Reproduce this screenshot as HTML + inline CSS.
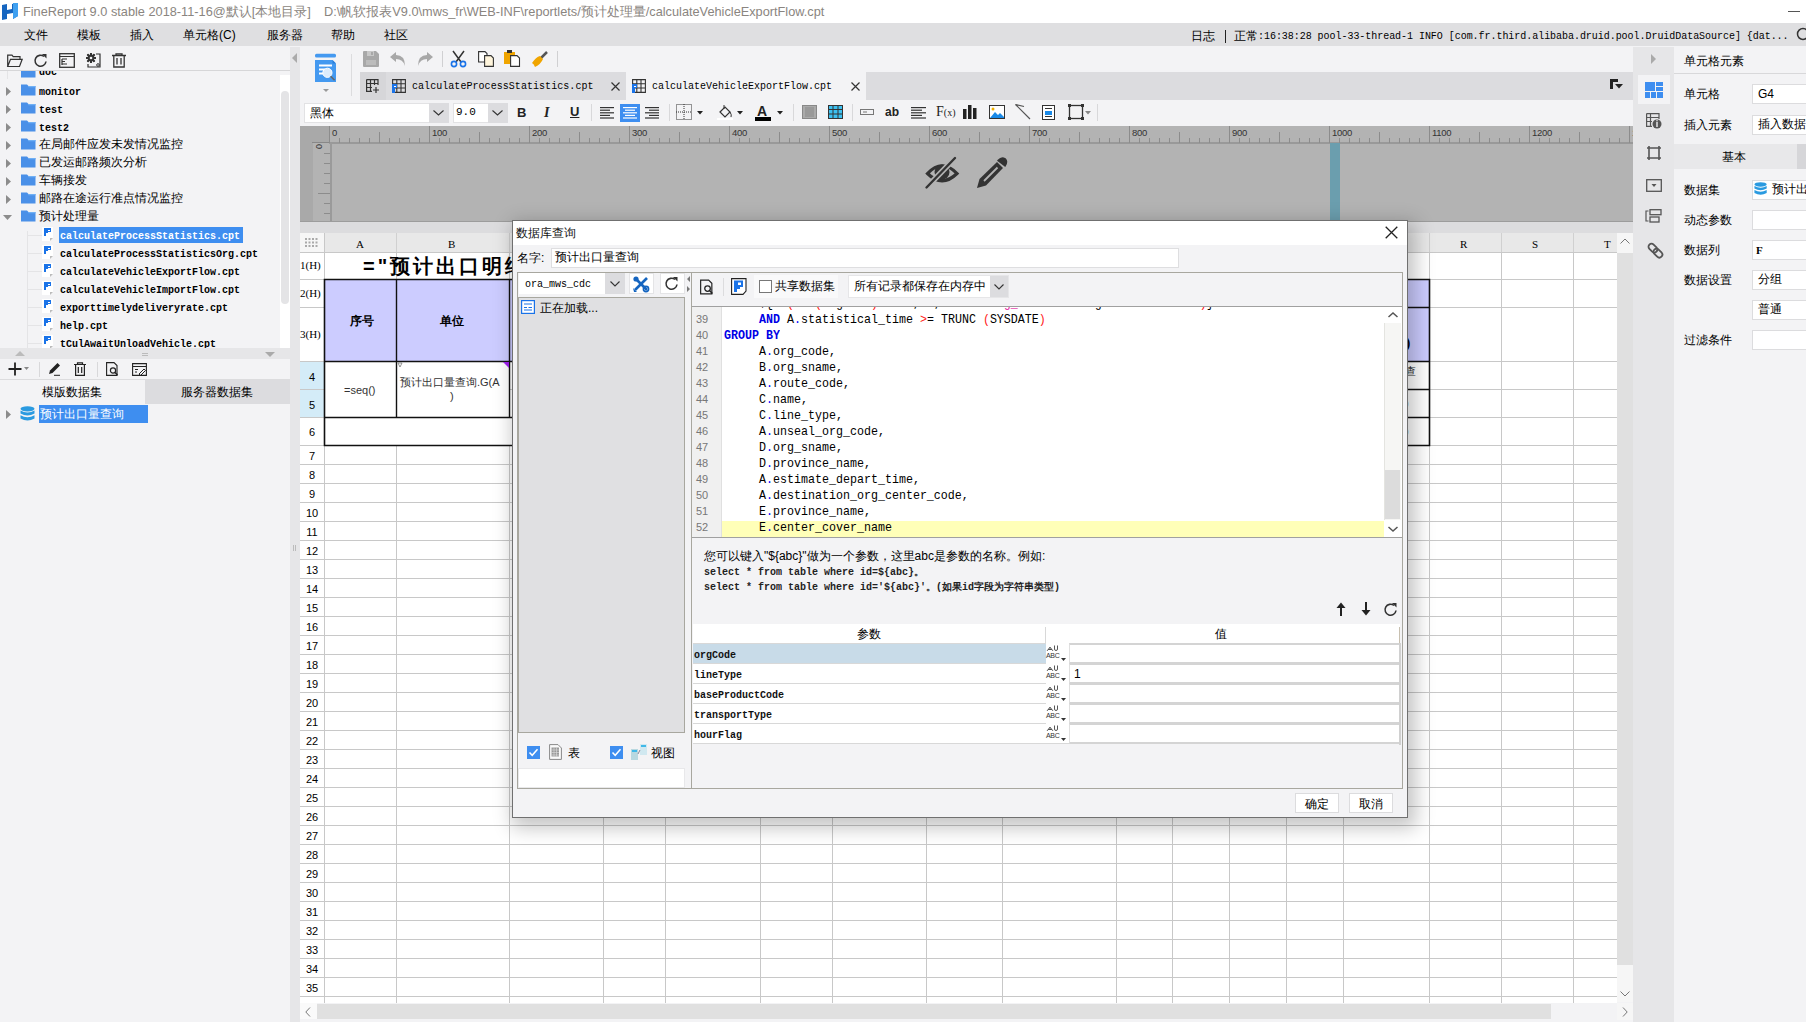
<!DOCTYPE html>
<html><head><meta charset="utf-8">
<style>
*{box-sizing:border-box;margin:0;padding:0}
html,body{width:1806px;height:1022px;overflow:hidden;background:#f3f3f5;font-family:"Liberation Sans",sans-serif;font-size:12px;color:#000}
.a{position:absolute}
.mono{font-family:"Liberation Mono",monospace}
.serif{font-family:"Liberation Serif",serif}
.t{position:absolute;white-space:nowrap;line-height:1}
svg{position:absolute;overflow:visible}
</style></head><body>
<div class="a" style="left:0;top:0;width:1806px;height:23px;background:#fff"></div>
<svg style="left:2px;top:2px" width="17" height="18" viewBox="0 0 17 18"><path d="M0 3 L5 2 L5 8 L10 7 L10 2 L16 1 L16 14 L11 17 L11 11 L5 12 L5 17 L0 18 Z" fill="#1565c0"/><path d="M11 1 L16 1 L16 14 L11 17 Z" fill="#3fa0f0"/></svg>
<div class="t" style="left:23px;top:6px;font-size:12.75px;color:#8a8580">FineReport 9.0 stable 2018-11-16@默认[本地目录]</div>
<div class="t" style="left:324px;top:6px;font-size:12.75px;color:#8a8580">D:\帆软报表V9.0\mws_fr\WEB-INF\reportlets/预计处理量/calculateVehicleExportFlow.cpt</div>
<div class="a" style="left:1788px;top:11px;width:12px;height:1px;background:#555"></div>
<div class="a" style="left:0;top:23px;width:1806px;height:23px;background:#dfdfe1"></div>
<div class="t" style="left:24px;top:29px;font-size:12px">文件</div>
<div class="t" style="left:77px;top:29px;font-size:12px">模板</div>
<div class="t" style="left:130px;top:29px;font-size:12px">插入</div>
<div class="t" style="left:183px;top:29px;font-size:12px">单元格(C)</div>
<div class="t" style="left:267px;top:29px;font-size:12px">服务器</div>
<div class="t" style="left:331px;top:29px;font-size:12px">帮助</div>
<div class="t" style="left:384px;top:29px;font-size:12px">社区</div>
<div class="t" style="left:1191px;top:30px;font-size:12px">日志</div><div class="a" style="left:1225px;top:30px;width:1px;height:13px;background:#222"></div><div class="t" style="left:1234px;top:30px;font-size:12px">正常</div><div class="t mono" style="left:1258px;top:32px;font-size:10px;letter-spacing:-0.04px">:16:38:28 pool-33-thread-1 INFO [com.fr.third.alibaba.druid.pool.DruidDataSource] {dat...</div>
<svg style="left:1796px;top:27px" width="14" height="14"><circle cx="7" cy="7" r="5.5" fill="none" stroke="#333" stroke-width="1.5"/></svg>
<div class="a" style="left:0;top:47px;width:290px;height:975px;background:#f3f3f5"></div>
<div class="a" style="left:0;top:70px;width:290px;height:1px;background:#d6d6d8"></div>
<svg style="left:7px;top:54px" width="16" height="14" viewBox="0 0 16 14"><path d="M0.7 12.5 V1.2 H5 L6.2 2.6 H13 V5.3 M0.7 12.5 L3.5 5.3 H15.2 L12.5 12.5 Z" fill="none" stroke="#333" stroke-width="1.2"/></svg>
<svg style="left:34px;top:53px" width="14" height="15" viewBox="0 0 14 15"><path d="M12 8.5 A5.5 5.5 0 1 1 10 3.5" fill="none" stroke="#333" stroke-width="1.6"/><path d="M8 1 L12.5 1 L12.5 5.5Z" fill="#333"/></svg>
<svg style="left:59px;top:53px" width="16" height="15" viewBox="0 0 16 15"><rect x="0.7" y="0.7" width="14.6" height="13.6" fill="none" stroke="#333" stroke-width="1.3"/><path d="M0.7 3.5 H15.3 M3 6 H8 M3 8.5 H6 M3 11 H8 M3 6 V12" fill="none" stroke="#333" stroke-width="1.2"/></svg>
<svg style="left:86px;top:53px" width="15" height="15" viewBox="0 0 15 15"><rect x="4.1" y="0" width="1.8" height="10" fill="#333" transform="rotate(0 5 5)"/><rect x="4.1" y="0" width="1.8" height="10" fill="#333" transform="rotate(45 5 5)"/><rect x="4.1" y="0" width="1.8" height="10" fill="#333" transform="rotate(90 5 5)"/><rect x="4.1" y="0" width="1.8" height="10" fill="#333" transform="rotate(135 5 5)"/><rect x="4.1" y="0" width="1.8" height="10" fill="#333" transform="rotate(180 5 5)"/><rect x="4.1" y="0" width="1.8" height="10" fill="#333" transform="rotate(225 5 5)"/><rect x="4.1" y="0" width="1.8" height="10" fill="#333" transform="rotate(270 5 5)"/><rect x="4.1" y="0" width="1.8" height="10" fill="#333" transform="rotate(315 5 5)"/><circle cx="5" cy="5" r="3.4" fill="#333"/><circle cx="5" cy="5" r="1.3" fill="#f3f3f5"/><path d="M10 1 H14 V14 H2 V11" fill="none" stroke="#333" stroke-width="1.2"/><circle cx="12" cy="12" r="1.3" fill="none" stroke="#333"/></svg>
<svg style="left:112px;top:53px" width="14" height="15" viewBox="0 0 14 15"><path d="M0 2.5 H14 M4 2.5 V0.8 H10 V2.5 M1.8 2.5 V14 H12.2 V2.5 M5 5 V11.5 M9 5 V11.5" fill="none" stroke="#333" stroke-width="1.3"/></svg>
<div class="a" style="left:0;top:71px;width:283px;height:277px;overflow:hidden">
<svg style="left:21px;top:-5px" width="15" height="12" viewBox="0 0 15 12"><path d="M0 0.5 H6 L7.5 2 H14.5 V11.5 H0 Z" fill="#4a90e8"/><path d="M7 2 H14.5 V3.2 H7.5 Z" fill="#6fb0f5"/></svg>
<div class="t mono" style="left:39px;top:-3px;font-size:10px;font-weight:bold">doc</div>
<svg style="left:21px;top:13px" width="15" height="12" viewBox="0 0 15 12"><path d="M0 0.5 H6 L7.5 2 H14.5 V11.5 H0 Z" fill="#4a90e8"/><path d="M7 2 H14.5 V3.2 H7.5 Z" fill="#6fb0f5"/></svg>
<svg style="left:6px;top:16px" width="6" height="9"><path d="M0 0 L5 4.5 L0 9Z" fill="#8c8c8c"/></svg>
<div class="t mono" style="left:39px;top:17px;font-size:10px;font-weight:bold">monitor</div>
<svg style="left:21px;top:31px" width="15" height="12" viewBox="0 0 15 12"><path d="M0 0.5 H6 L7.5 2 H14.5 V11.5 H0 Z" fill="#4a90e8"/><path d="M7 2 H14.5 V3.2 H7.5 Z" fill="#6fb0f5"/></svg>
<svg style="left:6px;top:34px" width="6" height="9"><path d="M0 0 L5 4.5 L0 9Z" fill="#8c8c8c"/></svg>
<div class="t mono" style="left:39px;top:35px;font-size:10px;font-weight:bold">test</div>
<svg style="left:21px;top:49px" width="15" height="12" viewBox="0 0 15 12"><path d="M0 0.5 H6 L7.5 2 H14.5 V11.5 H0 Z" fill="#4a90e8"/><path d="M7 2 H14.5 V3.2 H7.5 Z" fill="#6fb0f5"/></svg>
<svg style="left:6px;top:52px" width="6" height="9"><path d="M0 0 L5 4.5 L0 9Z" fill="#8c8c8c"/></svg>
<div class="t mono" style="left:39px;top:53px;font-size:10px;font-weight:bold">test2</div>
<svg style="left:21px;top:67px" width="15" height="12" viewBox="0 0 15 12"><path d="M0 0.5 H6 L7.5 2 H14.5 V11.5 H0 Z" fill="#4a90e8"/><path d="M7 2 H14.5 V3.2 H7.5 Z" fill="#6fb0f5"/></svg>
<svg style="left:6px;top:70px" width="6" height="9"><path d="M0 0 L5 4.5 L0 9Z" fill="#8c8c8c"/></svg>
<div class="t" style="left:39px;top:67px;font-size:12px">在局邮件应发未发情况监控</div>
<svg style="left:21px;top:85px" width="15" height="12" viewBox="0 0 15 12"><path d="M0 0.5 H6 L7.5 2 H14.5 V11.5 H0 Z" fill="#4a90e8"/><path d="M7 2 H14.5 V3.2 H7.5 Z" fill="#6fb0f5"/></svg>
<svg style="left:6px;top:88px" width="6" height="9"><path d="M0 0 L5 4.5 L0 9Z" fill="#8c8c8c"/></svg>
<div class="t" style="left:39px;top:85px;font-size:12px">已发运邮路频次分析</div>
<svg style="left:21px;top:103px" width="15" height="12" viewBox="0 0 15 12"><path d="M0 0.5 H6 L7.5 2 H14.5 V11.5 H0 Z" fill="#4a90e8"/><path d="M7 2 H14.5 V3.2 H7.5 Z" fill="#6fb0f5"/></svg>
<svg style="left:6px;top:106px" width="6" height="9"><path d="M0 0 L5 4.5 L0 9Z" fill="#8c8c8c"/></svg>
<div class="t" style="left:39px;top:103px;font-size:12px">车辆接发</div>
<svg style="left:21px;top:121px" width="15" height="12" viewBox="0 0 15 12"><path d="M0 0.5 H6 L7.5 2 H14.5 V11.5 H0 Z" fill="#4a90e8"/><path d="M7 2 H14.5 V3.2 H7.5 Z" fill="#6fb0f5"/></svg>
<svg style="left:6px;top:124px" width="6" height="9"><path d="M0 0 L5 4.5 L0 9Z" fill="#8c8c8c"/></svg>
<div class="t" style="left:39px;top:121px;font-size:12px">邮路在途运行准点情况监控</div>
<svg style="left:21px;top:139px" width="15" height="12" viewBox="0 0 15 12"><path d="M0 0.5 H6 L7.5 2 H14.5 V11.5 H0 Z" fill="#4a90e8"/><path d="M7 2 H14.5 V3.2 H7.5 Z" fill="#6fb0f5"/></svg>
<svg style="left:3px;top:144px" width="10" height="6"><path d="M0 0 L9 0 L4.5 5Z" fill="#8c8c8c"/></svg>
<div class="t" style="left:39px;top:139px;font-size:12px">预计处理量</div>
<div class="a" style="left:7px;top:0;width:1px;height:8px;background:#e4e4e6"></div>
<div class="a" style="left:27px;top:160px;width:1px;height:117px;background:#e4e4e6"></div>
<div class="a" style="left:28px;top:164px;width:14px;height:1px;background:#e4e4e6"></div>
<svg style="left:42px;top:156px" width="12" height="14" viewBox="0 0 12 14"><path d="M0 0 H11 V11 L8 14 H0 Z" fill="#fff"/><path d="M8 14 L11 11 H8 Z" fill="#bbb"/><path d="M2 1 H9 V5 H6 V6 H4 V9 H2 Z" fill="#1a73e8"/><path d="M6 3 H8 V4 H6Z M4 6 H6 V8 H4Z" fill="#fff"/></svg>
<div class="a" style="left:59px;top:156px;width:184px;height:16px;background:#3e8ef0"></div>
<div class="t mono" style="left:60px;top:161px;font-size:10px;color:#fff;font-weight:bold">calculateProcessStatistics.cpt</div>
<div class="a" style="left:28px;top:182px;width:14px;height:1px;background:#e4e4e6"></div>
<svg style="left:42px;top:174px" width="12" height="14" viewBox="0 0 12 14"><path d="M0 0 H11 V11 L8 14 H0 Z" fill="#fff"/><path d="M8 14 L11 11 H8 Z" fill="#bbb"/><path d="M2 1 H9 V5 H6 V6 H4 V9 H2 Z" fill="#1a73e8"/><path d="M6 3 H8 V4 H6Z M4 6 H6 V8 H4Z" fill="#fff"/></svg>
<div class="t mono" style="left:60px;top:179px;font-size:10px;color:#000;font-weight:bold">calculateProcessStatisticsOrg.cpt</div>
<div class="a" style="left:28px;top:200px;width:14px;height:1px;background:#e4e4e6"></div>
<svg style="left:42px;top:192px" width="12" height="14" viewBox="0 0 12 14"><path d="M0 0 H11 V11 L8 14 H0 Z" fill="#fff"/><path d="M8 14 L11 11 H8 Z" fill="#bbb"/><path d="M2 1 H9 V5 H6 V6 H4 V9 H2 Z" fill="#1a73e8"/><path d="M6 3 H8 V4 H6Z M4 6 H6 V8 H4Z" fill="#fff"/></svg>
<div class="t mono" style="left:60px;top:197px;font-size:10px;color:#000;font-weight:bold">calculateVehicleExportFlow.cpt</div>
<div class="a" style="left:28px;top:218px;width:14px;height:1px;background:#e4e4e6"></div>
<svg style="left:42px;top:210px" width="12" height="14" viewBox="0 0 12 14"><path d="M0 0 H11 V11 L8 14 H0 Z" fill="#fff"/><path d="M8 14 L11 11 H8 Z" fill="#bbb"/><path d="M2 1 H9 V5 H6 V6 H4 V9 H2 Z" fill="#1a73e8"/><path d="M6 3 H8 V4 H6Z M4 6 H6 V8 H4Z" fill="#fff"/></svg>
<div class="t mono" style="left:60px;top:215px;font-size:10px;color:#000;font-weight:bold">calculateVehicleImportFlow.cpt</div>
<div class="a" style="left:28px;top:236px;width:14px;height:1px;background:#e4e4e6"></div>
<svg style="left:42px;top:228px" width="12" height="14" viewBox="0 0 12 14"><path d="M0 0 H11 V11 L8 14 H0 Z" fill="#fff"/><path d="M8 14 L11 11 H8 Z" fill="#bbb"/><path d="M2 1 H9 V5 H6 V6 H4 V9 H2 Z" fill="#1a73e8"/><path d="M6 3 H8 V4 H6Z M4 6 H6 V8 H4Z" fill="#fff"/></svg>
<div class="t mono" style="left:60px;top:233px;font-size:10px;color:#000;font-weight:bold">exporttimelydeliveryrate.cpt</div>
<div class="a" style="left:28px;top:254px;width:14px;height:1px;background:#e4e4e6"></div>
<svg style="left:42px;top:246px" width="12" height="14" viewBox="0 0 12 14"><path d="M0 0 H11 V11 L8 14 H0 Z" fill="#fff"/><path d="M8 14 L11 11 H8 Z" fill="#bbb"/><path d="M2 1 H9 V5 H6 V6 H4 V9 H2 Z" fill="#1a73e8"/><path d="M6 3 H8 V4 H6Z M4 6 H6 V8 H4Z" fill="#fff"/></svg>
<div class="t mono" style="left:60px;top:251px;font-size:10px;color:#000;font-weight:bold">help.cpt</div>
<div class="a" style="left:28px;top:272px;width:14px;height:1px;background:#e4e4e6"></div>
<svg style="left:42px;top:264px" width="12" height="14" viewBox="0 0 12 14"><path d="M0 0 H11 V11 L8 14 H0 Z" fill="#fff"/><path d="M8 14 L11 11 H8 Z" fill="#bbb"/><path d="M2 1 H9 V5 H6 V6 H4 V9 H2 Z" fill="#1a73e8"/><path d="M6 3 H8 V4 H6Z M4 6 H6 V8 H4Z" fill="#fff"/></svg>
<div class="t mono" style="left:60px;top:269px;font-size:10px;color:#000;font-weight:bold">tCulAwaitUnloadVehicle.cpt</div>
</div>
<div class="a" style="left:280px;top:75px;width:10px;height:274px;background:#fff"></div>
<div class="a" style="left:281px;top:91px;width:8px;height:213px;background:#e4e4e6;border-radius:4px"></div>
<div class="a" style="left:0;top:348px;width:290px;height:11px;background:#e6e6e8"></div>
<svg style="left:15px;top:351px" width="10" height="5"><path d="M0 5 L5 0 L10 5Z" fill="#bbb"/></svg>
<svg style="left:265px;top:352px" width="10" height="5"><path d="M0 0 L10 0 L5 5Z" fill="#aaa"/></svg>
<div class="a" style="left:142px;top:353px;width:6px;height:1px;background:#bbb"></div><div class="a" style="left:142px;top:355px;width:6px;height:1px;background:#bbb"></div>
<div class="a" style="left:0;top:379px;width:290px;height:1px;background:#dcdcde"></div>
<svg style="left:8px;top:362px" width="24" height="14"><path d="M7 0.5 V13.5 M0.5 7 H13.5" stroke="#222" stroke-width="1.8"/></svg>
<svg style="left:24px;top:367px" width="6" height="4"><path d="M0 0 H5 L2.5 3Z" fill="#888"/></svg>
<div class="a" style="left:39px;top:362px;width:1px;height:15px;background:#d8d8da"></div>
<svg style="left:48px;top:362px" width="14" height="14" viewBox="0 0 14 14"><path d="M1 12 L2 8.5 L9.5 1 L12 3.5 L4.5 11Z" fill="#222"/><path d="M6 13.3 H12" stroke="#222" stroke-width="1"/></svg>
<svg style="left:74px;top:362px" width="12" height="14" viewBox="0 0 12 14"><path d="M0 2.5 H12 M3.5 2.5 V0.8 H8.5 V2.5 M1.6 2.5 V13.3 H10.4 V2.5 M4.3 5 V11 M7.7 5 V11" fill="none" stroke="#222" stroke-width="1.2"/></svg>
<div class="a" style="left:97px;top:362px;width:1px;height:15px;background:#d8d8da"></div>
<svg style="left:106px;top:362px" width="13" height="14" viewBox="0 0 13 14"><path d="M0.6 0.6 H8 L11 3.6 V13.4 H0.6Z" fill="none" stroke="#222" stroke-width="1.1"/><circle cx="7" cy="8.5" r="2.6" fill="none" stroke="#222" stroke-width="1.2"/><path d="M9 10.5 L11.5 13" stroke="#222" stroke-width="1.4"/></svg>
<svg style="left:132px;top:363px" width="15" height="13" viewBox="0 0 15 13"><path d="M0.6 0.6 H14.4 V12.4 H0.6Z M0.6 3.5 H14.4 M3 6.5 H6 M3 9 H5" fill="none" stroke="#222" stroke-width="1.1"/><path d="M7 11 L12 6 L13.5 7.5 L8.5 12.5Z" fill="none" stroke="#222" stroke-width="1"/></svg>
<div class="a" style="left:145px;top:380px;width:145px;height:24px;background:#dcdcdf"></div>
<div class="t" style="left:42px;top:386px;font-size:12px">模版数据集</div>
<div class="t" style="left:181px;top:386px;font-size:12px">服务器数据集</div>
<svg style="left:6px;top:410px" width="6" height="9"><path d="M0 0 L5 4.5 L0 9Z" fill="#8c8c8c"/></svg>
<svg style="left:20px;top:406px" width="16" height="16" viewBox="0 0 16 16"><ellipse cx="7.5" cy="2.8" rx="7" ry="2.6" fill="#2a9ae0"/><path d="M0.5 4.5 Q7.5 8.5 14.5 4.5 V7.5 Q7.5 11.5 0.5 7.5Z" fill="#2a9ae0"/><path d="M0.5 9.2 Q7.5 13.2 14.5 9.2 V12.5 Q7.5 16.5 0.5 12.5Z" fill="#2a9ae0"/></svg>
<div class="a" style="left:39px;top:405px;width:109px;height:18px;background:#3e8ef0"></div>
<div class="t" style="left:40px;top:408px;font-size:12px;color:#fff">预计出口量查询</div>
<div class="a" style="left:290px;top:47px;width:10px;height:975px;background:#e6e6e8"></div>
<svg style="left:292px;top:53px" width="6" height="10"><path d="M5 0 L0 5 L5 10Z" fill="#aaa"/></svg>
<div class="a" style="left:293px;top:545px;width:1px;height:6px;background:#bbb"></div><div class="a" style="left:295px;top:545px;width:1px;height:6px;background:#bbb"></div>
<div class="a" style="left:300px;top:47px;width:1333px;height:79px;background:#f3f3f5"></div>
<svg style="left:315px;top:53px" width="21" height="29" viewBox="0 0 21 29"><rect x="0" y="0.8" width="21" height="3.8" rx="1.5" fill="#4499f0"/><path d="M0 7 H17.5 L21 10.5 V29 H0Z" fill="#4499f0"/><path d="M17.5 7 L21 10.5 H17.5Z" fill="#2a7fd8"/><rect x="4" y="11.5" width="13" height="2" fill="#fff"/><rect x="4" y="15.5" width="6" height="2" fill="#fff"/><rect x="4" y="19.5" width="6" height="2" fill="#fff"/><circle cx="12.4" cy="19.8" r="4.6" fill="#dcecfc" stroke="#fff" stroke-width="1"/><path d="M15.6 23.2 L19.6 27.2" stroke="#666" stroke-width="1.6"/></svg>
<svg style="left:323px;top:89px" width="7" height="4"><path d="M0 0 H6 L3 3Z" fill="#999"/></svg>
<div class="a" style="left:351px;top:54px;width:1px;height:42px;background:#dcdcde"></div>
<svg style="left:363px;top:51px" width="16" height="16" viewBox="0 0 16 16"><path d="M0 1 Q0 0 1 0 H13 L16 3 V15 Q16 16 15 16 H1 Q0 16 0 15Z" fill="#a8a8a8"/><rect x="4" y="0" width="7" height="5" fill="#c8c8c8"/><rect x="8" y="1" width="2" height="3" fill="#a8a8a8"/><rect x="3" y="9" width="10" height="5" fill="#bcbcbc"/></svg>
<svg style="left:390px;top:52px" width="17" height="15" viewBox="0 0 17 15"><path d="M6 0 L0 5 L6 10 V7 Q13 7 15 14 Q15 3 6 3Z" fill="#a8a8a8"/></svg>
<svg style="left:416px;top:52px" width="17" height="15" viewBox="0 0 17 15"><path d="M11 0 L17 5 L11 10 V7 Q4 7 2 14 Q2 3 11 3Z" fill="#a8a8a8"/></svg>
<div class="a" style="left:442px;top:51px;width:1px;height:16px;background:#d0d0d2"></div>
<svg style="left:450px;top:51px" width="17" height="16" viewBox="0 0 17 16"><path d="M3 0 L11 11 M14 0 L6 11" stroke="#333" stroke-width="1.5"/><circle cx="4" cy="13" r="2.6" fill="none" stroke="#1a73e8" stroke-width="1.6"/><circle cx="13" cy="13" r="2.6" fill="none" stroke="#1a73e8" stroke-width="1.6"/></svg>
<svg style="left:478px;top:51px" width="16" height="16" viewBox="0 0 16 16"><path d="M0.6 0.6 H7 L9 2.6 V11 H0.6Z" fill="#fff" stroke="#333" stroke-width="1.1"/><path d="M6.6 4.6 H13 L15.4 7 V15.4 H6.6Z" fill="#fff5dc" stroke="#333" stroke-width="1.1"/></svg>
<svg style="left:504px;top:50px" width="17" height="17" viewBox="0 0 17 17"><rect x="0" y="2" width="11" height="12" fill="#f0a500"/><rect x="3" y="0" width="5" height="3" fill="#333"/><path d="M6.6 5.6 H13 L15.5 8 V16.4 H6.6Z" fill="#fff" stroke="#333" stroke-width="1.1"/></svg>
<svg style="left:532px;top:51px" width="16" height="16" viewBox="0 0 16 16"><path d="M9 7 L15 1" stroke="#555" stroke-width="2.5"/><path d="M0 12 Q4 6 8 5 L11 8 Q9 13 3 16 Q2 13 0 12Z" fill="#f0a500"/></svg>
<div class="a" style="left:557px;top:51px;width:1px;height:16px;background:#d0d0d2"></div>
<div class="a" style="left:360px;top:72px;width:1273px;height:28px;background:#dcdcdf"></div>
<div class="a" style="left:360px;top:72px;width:26px;height:28px;background:#d6d6d9"></div>
<svg style="left:366px;top:79px" width="14" height="14" viewBox="0 0 14 14"><path d="M0.6 0.6 H12 V6 M0.6 0.6 V12.4 H6 M0.6 4.5 H12 M0.6 8.5 H6 M4.5 0.6 V12.4 M8.5 0.6 V6 M10 8 V14 M7 11 H13" fill="none" stroke="#333" stroke-width="1.2"/></svg>
<svg style="left:392px;top:79px" width="14" height="14" viewBox="0 0 14 14"><path d="M0.6 0.6 H13.4 V13.4 H0.6Z M0.6 4.8 H13.4 M0.6 9 H13.4 M4.8 0.6 V13.4 M9 0.6 V13.4" fill="none" stroke="#333" stroke-width="1.1"/><path d="M0 5 H5 V9 H3 V14 H0Z" fill="#1a73e8"/><path d="M2 7 H4 V8 H2Z" fill="#fff"/></svg>
<div class="t mono" style="left:412px;top:82px;font-size:10px;letter-spacing:0.05px">calculateProcessStatistics.cpt</div>
<svg style="left:611px;top:82px" width="9" height="9"><path d="M0.5 0.5 L8.5 8.5 M8.5 0.5 L0.5 8.5" stroke="#333" stroke-width="1.2"/></svg>
<div class="a" style="left:626px;top:72px;width:240px;height:28px;background:#f3f3f5"></div>
<svg style="left:632px;top:79px" width="14" height="14" viewBox="0 0 14 14"><path d="M0.6 0.6 H13.4 V13.4 H0.6Z M0.6 4.8 H13.4 M0.6 9 H13.4 M4.8 0.6 V13.4 M9 0.6 V13.4" fill="none" stroke="#333" stroke-width="1.1"/><path d="M0 5 H5 V9 H3 V14 H0Z" fill="#1a73e8"/><path d="M2 7 H4 V8 H2Z" fill="#fff"/></svg>
<div class="t mono" style="left:652px;top:82px;font-size:10px">calculateVehicleExportFlow.cpt</div>
<svg style="left:851px;top:82px" width="9" height="9"><path d="M0.5 0.5 L8.5 8.5 M8.5 0.5 L0.5 8.5" stroke="#333" stroke-width="1.2"/></svg>
<svg style="left:1610px;top:79px" width="13" height="12" viewBox="0 0 13 12"><path d="M0 0 H8 V3 H3 V10 H0Z" fill="#222"/><path d="M5 5 H13 L9 9.5Z" fill="#222"/></svg>
<div class="a" style="left:304px;top:103px;width:145px;height:20px;background:#fff;border:1px solid #e2e2e4"></div>
<div class="a" style="left:429px;top:103px;width:20px;height:20px;background:#dcdcdf"></div>
<div class="t" style="left:310px;top:107px;font-size:12px">黑体</div>
<svg style="left:433px;top:110px" width="11" height="6"><path d="M0.5 0.5 L5.5 5 L10.5 0.5" fill="none" stroke="#333" stroke-width="1.1"/></svg>
<div class="a" style="left:453px;top:103px;width:55px;height:20px;background:#fff;border:1px solid #e2e2e4"></div>
<div class="a" style="left:488px;top:103px;width:20px;height:20px;background:#dcdcdf"></div>
<div class="t mono" style="left:456px;top:107px;font-size:11px">9.0</div>
<svg style="left:492px;top:110px" width="11" height="6"><path d="M0.5 0.5 L5.5 5 L10.5 0.5" fill="none" stroke="#333" stroke-width="1.1"/></svg>
<div class="t" style="left:517px;top:106px;font-size:13px;font-weight:bold;color:#222">B</div>
<div class="t serif" style="left:544px;top:106px;font-size:14px;font-style:italic;font-weight:bold;color:#222">I</div>
<div class="t" style="left:570px;top:105px;font-size:13px;font-weight:bold;color:#222;text-decoration:underline">U</div>
<div class="a" style="left:591px;top:104px;width:1px;height:17px;background:#d8d8da"></div>
<svg style="left:600px;top:106px" width="16" height="14"><rect x="0" y="1.0" width="14" height="1.2" fill="#333"/><rect x="0" y="3.6" width="10" height="1.2" fill="#333"/><rect x="0" y="6.2" width="14" height="1.2" fill="#333"/><rect x="0" y="8.8" width="10" height="1.2" fill="#333"/><rect x="0" y="11.4" width="14" height="1.2" fill="#333"/></svg>
<div class="a" style="left:620px;top:104px;width:20px;height:18px;background:#3e8ef0"></div>
<svg style="left:623px;top:106px" width="16" height="14"><rect x="0" y="1.0" width="14" height="1.2" fill="#fff"/><rect x="2" y="3.6" width="10" height="1.2" fill="#fff"/><rect x="0" y="6.2" width="14" height="1.2" fill="#fff"/><rect x="2" y="8.8" width="10" height="1.2" fill="#fff"/><rect x="0" y="11.4" width="14" height="1.2" fill="#fff"/></svg>
<svg style="left:645px;top:106px" width="16" height="14"><rect x="0" y="1.0" width="14" height="1.2" fill="#333"/><rect x="4" y="3.6" width="10" height="1.2" fill="#333"/><rect x="0" y="6.2" width="14" height="1.2" fill="#333"/><rect x="4" y="8.8" width="10" height="1.2" fill="#333"/><rect x="0" y="11.4" width="14" height="1.2" fill="#333"/></svg>
<div class="a" style="left:669px;top:104px;width:1px;height:17px;background:#d8d8da"></div>
<svg style="left:676px;top:104px" width="16" height="16"><rect x="0.5" y="0.5" width="15" height="15" fill="none" stroke="#333" stroke-dasharray="1 1"/><path d="M8 0 V16 M0 8 H16" stroke="#333" stroke-dasharray="1 1"/></svg>
<svg style="left:697px;top:111px" width="7" height="4"><path d="M0 0 H6 L3 3.5Z" fill="#222"/></svg>
<svg style="left:717px;top:104px" width="16" height="16"><path d="M3 8 L8 3 L13 8 L8 13Z" fill="none" stroke="#333" stroke-width="1.2"/><path d="M7 1 V5" stroke="#333"/><path d="M13 8 Q15 11 14 13" stroke="#333" fill="none"/><rect x="0" y="14" width="16" height="2" fill="#fff"/></svg>
<svg style="left:737px;top:111px" width="7" height="4"><path d="M0 0 H6 L3 3.5Z" fill="#222"/></svg>
<div class="t" style="left:757px;top:104px;font-size:14px;font-weight:bold;color:#222">A</div>
<div class="a" style="left:755px;top:117px;width:16px;height:4px;background:#000"></div>
<svg style="left:777px;top:111px" width="7" height="4"><path d="M0 0 H6 L3 3.5Z" fill="#222"/></svg>
<div class="a" style="left:793px;top:104px;width:1px;height:17px;background:#d8d8da"></div>
<svg style="left:802px;top:105px" width="15" height="14"><rect x="0.5" y="0.5" width="14" height="13" fill="#aaa" stroke="#888"/><rect x="3" y="2" width="9" height="10" fill="#999"/></svg>
<svg style="left:828px;top:105px" width="15" height="14"><rect x="0.5" y="0.5" width="14" height="13" fill="#3cc0f0" stroke="#333"/><path d="M0 4.5 H15 M0 9 H15 M5 0 V14 M10 0 V14" stroke="#333"/></svg>
<div class="a" style="left:852px;top:104px;width:1px;height:17px;background:#d8d8da"></div>
<svg style="left:860px;top:109px" width="14" height="6"><rect x="0.5" y="0.5" width="13" height="5" fill="none" stroke="#777"/><rect x="3" y="2.5" width="4" height="1" fill="#777"/></svg>
<div class="t" style="left:885px;top:106px;font-size:12px;font-weight:bold;color:#222">ab</div>
<svg style="left:911px;top:106px" width="16" height="14"><rect x="0" y="1.0" width="15" height="1.2" fill="#333"/><rect x="0" y="3.6" width="11" height="1.2" fill="#333"/><rect x="0" y="6.2" width="15" height="1.2" fill="#333"/><rect x="0" y="8.8" width="11" height="1.2" fill="#333"/><rect x="0" y="11.4" width="15" height="1.2" fill="#333"/></svg>
<div class="t serif" style="left:936px;top:105px;font-size:14px;color:#222">F<span style="font-size:10px">(x)</span></div>
<svg style="left:963px;top:105px" width="15" height="14"><rect x="0" y="4" width="3.5" height="10" fill="#222"/><rect x="5" y="0" width="3.5" height="14" fill="#222"/><rect x="10" y="3" width="3.5" height="11" fill="#222"/></svg>
<svg style="left:989px;top:105px" width="16" height="14"><rect x="0.5" y="0.5" width="15" height="13" fill="#fff" stroke="#333"/><path d="M1 13 L6 7 L9 10 L11 8 L15 12 V13Z" fill="#1a8ae8"/><circle cx="4" cy="4" r="1.5" fill="#f0b000"/></svg>
<svg style="left:1015px;top:104px" width="16" height="16"><path d="M0.5 0.5 L9 2.5 M0.5 0.5 L15 15" stroke="#555" stroke-width="1.2"/></svg>
<svg style="left:1042px;top:105px" width="13" height="15"><rect x="0.5" y="0.5" width="12" height="14" fill="#fff" stroke="#333"/><rect x="3" y="3" width="7" height="1" fill="#333"/><rect x="3" y="6" width="7" height="4" fill="#1a8ae8"/><rect x="3" y="11" width="7" height="1" fill="#333"/></svg>
<svg style="left:1068px;top:104px" width="16" height="16"><rect x="1.5" y="1.5" width="13" height="13" fill="none" stroke="#333" stroke-width="1.3"/><rect x="0" y="0" width="3" height="3" fill="#333"/><rect x="13" y="0" width="3" height="3" fill="#333"/><rect x="0" y="13" width="3" height="3" fill="#333"/><rect x="13" y="13" width="3" height="3" fill="#333"/></svg>
<svg style="left:1085px;top:111px" width="7" height="4"><path d="M0 0 H6 L3 3.5Z" fill="#888"/></svg>
<div class="a" style="left:1097px;top:104px;width:1px;height:17px;background:#d8d8da"></div>
<div class="a" style="left:300px;top:126px;width:1333px;height:96px;background:#b3b3b3"></div>
<div class="a" style="left:300px;top:126px;width:30px;height:17px;background:#a9a9a9"></div>
<div class="a" style="left:300px;top:143px;width:13px;height:79px;background:#a9a9a9"></div>
<div class="a" style="left:312px;top:142px;width:18px;height:1px;background:#888"></div>
<div class="a" style="left:329px;top:142px;width:1304px;height:1.5px;background:#999"></div>
<div class="a" style="left:330px;top:143px;width:2px;height:79px;background:#9a9a9a"></div>
<svg style="left:0;top:0" width="1633" height="222"><path d="M329.5 126 V143" stroke="#8c8c8c" stroke-width="1"/><path d="M339.5 138 V143" stroke="#8c8c8c" stroke-width="1"/><path d="M349.5 138 V143" stroke="#8c8c8c" stroke-width="1"/><path d="M359.5 138 V143" stroke="#8c8c8c" stroke-width="1"/><path d="M369.5 138 V143" stroke="#8c8c8c" stroke-width="1"/><path d="M379.5 132 V143" stroke="#8c8c8c" stroke-width="1"/><path d="M389.5 138 V143" stroke="#8c8c8c" stroke-width="1"/><path d="M399.5 138 V143" stroke="#8c8c8c" stroke-width="1"/><path d="M409.5 138 V143" stroke="#8c8c8c" stroke-width="1"/><path d="M419.5 138 V143" stroke="#8c8c8c" stroke-width="1"/><path d="M429.5 126 V143" stroke="#8c8c8c" stroke-width="1"/><path d="M439.5 138 V143" stroke="#8c8c8c" stroke-width="1"/><path d="M449.5 138 V143" stroke="#8c8c8c" stroke-width="1"/><path d="M459.5 138 V143" stroke="#8c8c8c" stroke-width="1"/><path d="M469.5 138 V143" stroke="#8c8c8c" stroke-width="1"/><path d="M479.5 132 V143" stroke="#8c8c8c" stroke-width="1"/><path d="M489.5 138 V143" stroke="#8c8c8c" stroke-width="1"/><path d="M499.5 138 V143" stroke="#8c8c8c" stroke-width="1"/><path d="M509.5 138 V143" stroke="#8c8c8c" stroke-width="1"/><path d="M519.5 138 V143" stroke="#8c8c8c" stroke-width="1"/><path d="M529.5 126 V143" stroke="#8c8c8c" stroke-width="1"/><path d="M539.5 138 V143" stroke="#8c8c8c" stroke-width="1"/><path d="M549.5 138 V143" stroke="#8c8c8c" stroke-width="1"/><path d="M559.5 138 V143" stroke="#8c8c8c" stroke-width="1"/><path d="M569.5 138 V143" stroke="#8c8c8c" stroke-width="1"/><path d="M579.5 132 V143" stroke="#8c8c8c" stroke-width="1"/><path d="M589.5 138 V143" stroke="#8c8c8c" stroke-width="1"/><path d="M599.5 138 V143" stroke="#8c8c8c" stroke-width="1"/><path d="M609.5 138 V143" stroke="#8c8c8c" stroke-width="1"/><path d="M619.5 138 V143" stroke="#8c8c8c" stroke-width="1"/><path d="M629.5 126 V143" stroke="#8c8c8c" stroke-width="1"/><path d="M639.5 138 V143" stroke="#8c8c8c" stroke-width="1"/><path d="M649.5 138 V143" stroke="#8c8c8c" stroke-width="1"/><path d="M659.5 138 V143" stroke="#8c8c8c" stroke-width="1"/><path d="M669.5 138 V143" stroke="#8c8c8c" stroke-width="1"/><path d="M679.5 132 V143" stroke="#8c8c8c" stroke-width="1"/><path d="M689.5 138 V143" stroke="#8c8c8c" stroke-width="1"/><path d="M699.5 138 V143" stroke="#8c8c8c" stroke-width="1"/><path d="M709.5 138 V143" stroke="#8c8c8c" stroke-width="1"/><path d="M719.5 138 V143" stroke="#8c8c8c" stroke-width="1"/><path d="M729.5 126 V143" stroke="#8c8c8c" stroke-width="1"/><path d="M739.5 138 V143" stroke="#8c8c8c" stroke-width="1"/><path d="M749.5 138 V143" stroke="#8c8c8c" stroke-width="1"/><path d="M759.5 138 V143" stroke="#8c8c8c" stroke-width="1"/><path d="M769.5 138 V143" stroke="#8c8c8c" stroke-width="1"/><path d="M779.5 132 V143" stroke="#8c8c8c" stroke-width="1"/><path d="M789.5 138 V143" stroke="#8c8c8c" stroke-width="1"/><path d="M799.5 138 V143" stroke="#8c8c8c" stroke-width="1"/><path d="M809.5 138 V143" stroke="#8c8c8c" stroke-width="1"/><path d="M819.5 138 V143" stroke="#8c8c8c" stroke-width="1"/><path d="M829.5 126 V143" stroke="#8c8c8c" stroke-width="1"/><path d="M839.5 138 V143" stroke="#8c8c8c" stroke-width="1"/><path d="M849.5 138 V143" stroke="#8c8c8c" stroke-width="1"/><path d="M859.5 138 V143" stroke="#8c8c8c" stroke-width="1"/><path d="M869.5 138 V143" stroke="#8c8c8c" stroke-width="1"/><path d="M879.5 132 V143" stroke="#8c8c8c" stroke-width="1"/><path d="M889.5 138 V143" stroke="#8c8c8c" stroke-width="1"/><path d="M899.5 138 V143" stroke="#8c8c8c" stroke-width="1"/><path d="M909.5 138 V143" stroke="#8c8c8c" stroke-width="1"/><path d="M919.5 138 V143" stroke="#8c8c8c" stroke-width="1"/><path d="M929.5 126 V143" stroke="#8c8c8c" stroke-width="1"/><path d="M939.5 138 V143" stroke="#8c8c8c" stroke-width="1"/><path d="M949.5 138 V143" stroke="#8c8c8c" stroke-width="1"/><path d="M959.5 138 V143" stroke="#8c8c8c" stroke-width="1"/><path d="M969.5 138 V143" stroke="#8c8c8c" stroke-width="1"/><path d="M979.5 132 V143" stroke="#8c8c8c" stroke-width="1"/><path d="M989.5 138 V143" stroke="#8c8c8c" stroke-width="1"/><path d="M999.5 138 V143" stroke="#8c8c8c" stroke-width="1"/><path d="M1009.5 138 V143" stroke="#8c8c8c" stroke-width="1"/><path d="M1019.5 138 V143" stroke="#8c8c8c" stroke-width="1"/><path d="M1029.5 126 V143" stroke="#8c8c8c" stroke-width="1"/><path d="M1039.5 138 V143" stroke="#8c8c8c" stroke-width="1"/><path d="M1049.5 138 V143" stroke="#8c8c8c" stroke-width="1"/><path d="M1059.5 138 V143" stroke="#8c8c8c" stroke-width="1"/><path d="M1069.5 138 V143" stroke="#8c8c8c" stroke-width="1"/><path d="M1079.5 132 V143" stroke="#8c8c8c" stroke-width="1"/><path d="M1089.5 138 V143" stroke="#8c8c8c" stroke-width="1"/><path d="M1099.5 138 V143" stroke="#8c8c8c" stroke-width="1"/><path d="M1109.5 138 V143" stroke="#8c8c8c" stroke-width="1"/><path d="M1119.5 138 V143" stroke="#8c8c8c" stroke-width="1"/><path d="M1129.5 126 V143" stroke="#8c8c8c" stroke-width="1"/><path d="M1139.5 138 V143" stroke="#8c8c8c" stroke-width="1"/><path d="M1149.5 138 V143" stroke="#8c8c8c" stroke-width="1"/><path d="M1159.5 138 V143" stroke="#8c8c8c" stroke-width="1"/><path d="M1169.5 138 V143" stroke="#8c8c8c" stroke-width="1"/><path d="M1179.5 132 V143" stroke="#8c8c8c" stroke-width="1"/><path d="M1189.5 138 V143" stroke="#8c8c8c" stroke-width="1"/><path d="M1199.5 138 V143" stroke="#8c8c8c" stroke-width="1"/><path d="M1209.5 138 V143" stroke="#8c8c8c" stroke-width="1"/><path d="M1219.5 138 V143" stroke="#8c8c8c" stroke-width="1"/><path d="M1229.5 126 V143" stroke="#8c8c8c" stroke-width="1"/><path d="M1239.5 138 V143" stroke="#8c8c8c" stroke-width="1"/><path d="M1249.5 138 V143" stroke="#8c8c8c" stroke-width="1"/><path d="M1259.5 138 V143" stroke="#8c8c8c" stroke-width="1"/><path d="M1269.5 138 V143" stroke="#8c8c8c" stroke-width="1"/><path d="M1279.5 132 V143" stroke="#8c8c8c" stroke-width="1"/><path d="M1289.5 138 V143" stroke="#8c8c8c" stroke-width="1"/><path d="M1299.5 138 V143" stroke="#8c8c8c" stroke-width="1"/><path d="M1309.5 138 V143" stroke="#8c8c8c" stroke-width="1"/><path d="M1319.5 138 V143" stroke="#8c8c8c" stroke-width="1"/><path d="M1329.5 126 V143" stroke="#8c8c8c" stroke-width="1"/><path d="M1339.5 138 V143" stroke="#8c8c8c" stroke-width="1"/><path d="M1349.5 138 V143" stroke="#8c8c8c" stroke-width="1"/><path d="M1359.5 138 V143" stroke="#8c8c8c" stroke-width="1"/><path d="M1369.5 138 V143" stroke="#8c8c8c" stroke-width="1"/><path d="M1379.5 132 V143" stroke="#8c8c8c" stroke-width="1"/><path d="M1389.5 138 V143" stroke="#8c8c8c" stroke-width="1"/><path d="M1399.5 138 V143" stroke="#8c8c8c" stroke-width="1"/><path d="M1409.5 138 V143" stroke="#8c8c8c" stroke-width="1"/><path d="M1419.5 138 V143" stroke="#8c8c8c" stroke-width="1"/><path d="M1429.5 126 V143" stroke="#8c8c8c" stroke-width="1"/><path d="M1439.5 138 V143" stroke="#8c8c8c" stroke-width="1"/><path d="M1449.5 138 V143" stroke="#8c8c8c" stroke-width="1"/><path d="M1459.5 138 V143" stroke="#8c8c8c" stroke-width="1"/><path d="M1469.5 138 V143" stroke="#8c8c8c" stroke-width="1"/><path d="M1479.5 132 V143" stroke="#8c8c8c" stroke-width="1"/><path d="M1489.5 138 V143" stroke="#8c8c8c" stroke-width="1"/><path d="M1499.5 138 V143" stroke="#8c8c8c" stroke-width="1"/><path d="M1509.5 138 V143" stroke="#8c8c8c" stroke-width="1"/><path d="M1519.5 138 V143" stroke="#8c8c8c" stroke-width="1"/><path d="M1529.5 126 V143" stroke="#8c8c8c" stroke-width="1"/><path d="M1539.5 138 V143" stroke="#8c8c8c" stroke-width="1"/><path d="M1549.5 138 V143" stroke="#8c8c8c" stroke-width="1"/><path d="M1559.5 138 V143" stroke="#8c8c8c" stroke-width="1"/><path d="M1569.5 138 V143" stroke="#8c8c8c" stroke-width="1"/><path d="M1579.5 132 V143" stroke="#8c8c8c" stroke-width="1"/><path d="M1589.5 138 V143" stroke="#8c8c8c" stroke-width="1"/><path d="M1599.5 138 V143" stroke="#8c8c8c" stroke-width="1"/><path d="M1609.5 138 V143" stroke="#8c8c8c" stroke-width="1"/><path d="M1619.5 138 V143" stroke="#8c8c8c" stroke-width="1"/><path d="M1629.5 126 V143" stroke="#8c8c8c" stroke-width="1"/><path d="M324 153.5 H330" stroke="#8c8c8c"/><path d="M324 163.5 H330" stroke="#8c8c8c"/><path d="M324 173.5 H330" stroke="#8c8c8c"/><path d="M324 183.5 H330" stroke="#8c8c8c"/><path d="M318 193.5 H330" stroke="#8c8c8c"/><path d="M324 203.5 H330" stroke="#8c8c8c"/><path d="M324 213.5 H330" stroke="#8c8c8c"/></svg>
<div class="t" style="left:332.0px;top:128px;font-size:9.5px;color:#333;letter-spacing:-0.3px">0</div>
<div class="t" style="left:432.0px;top:128px;font-size:9.5px;color:#333;letter-spacing:-0.3px">100</div>
<div class="t" style="left:532.0px;top:128px;font-size:9.5px;color:#333;letter-spacing:-0.3px">200</div>
<div class="t" style="left:632.0px;top:128px;font-size:9.5px;color:#333;letter-spacing:-0.3px">300</div>
<div class="t" style="left:732.0px;top:128px;font-size:9.5px;color:#333;letter-spacing:-0.3px">400</div>
<div class="t" style="left:832.0px;top:128px;font-size:9.5px;color:#333;letter-spacing:-0.3px">500</div>
<div class="t" style="left:932.0px;top:128px;font-size:9.5px;color:#333;letter-spacing:-0.3px">600</div>
<div class="t" style="left:1032.0px;top:128px;font-size:9.5px;color:#333;letter-spacing:-0.3px">700</div>
<div class="t" style="left:1132.0px;top:128px;font-size:9.5px;color:#333;letter-spacing:-0.3px">800</div>
<div class="t" style="left:1232.0px;top:128px;font-size:9.5px;color:#333;letter-spacing:-0.3px">900</div>
<div class="t" style="left:1332.0px;top:128px;font-size:9.5px;color:#333;letter-spacing:-0.3px">1000</div>
<div class="t" style="left:1432.0px;top:128px;font-size:9.5px;color:#333;letter-spacing:-0.3px">1100</div>
<div class="t" style="left:1532.0px;top:128px;font-size:9.5px;color:#333;letter-spacing:-0.3px">1200</div>
<div class="t" style="left:1632.0px;top:128px;font-size:9.5px;color:#333;letter-spacing:-0.3px">1300</div>
<div class="t" style="left:316px;top:144px;font-size:9px;color:#333;transform:rotate(90deg);transform-origin:left top;left:323px">0</div>
<div class="a" style="left:1330px;top:143px;width:10px;height:79px;background:#6b9eae"></div>
<svg style="left:915px;top:150px" width="100" height="45" viewBox="0 0 100 45"><path d="M12.5 23.5 Q27 8 42 23.5 Q27 38 12.5 23.5Z" fill="none" stroke="#333" stroke-width="3.2"/><circle cx="27" cy="22" r="7.5" fill="#333"/><path d="M11.5 37.5 L40 8" stroke="#b3b3b3" stroke-width="5.5"/><path d="M11.5 37.5 L40 8" stroke="#333" stroke-width="2.4" stroke-linecap="round"/><path d="M62 38 L64.5 29 L82 12 L88 18 L71 35.5Z" fill="#333"/><path d="M69 31 L82.5 17.5" stroke="#b3b3b3" stroke-width="1.8"/><path d="M83.5 10.5 Q86.5 7 90 9 Q92.5 11.5 90 15.5 Z" fill="#333" stroke="#333" stroke-width="2"/></svg>
<div class="a" style="left:300px;top:221px;width:1333px;height:1px;background:#9c9c9c"></div>
<div class="a" style="left:300px;top:222px;width:1333px;height:11px;background:#dcdcde"></div>
<div class="a" style="left:300px;top:233px;width:1317px;height:19px;background:#e8e8e8"></div>
<div class="a" style="left:300px;top:233px;width:24px;height:19px;background:#f6f6f6"></div>
<svg style="left:305px;top:238px" width="14" height="10"><rect x="0.0" y="0.0" width="2" height="2" fill="#aaa"/><rect x="0.0" y="3.5" width="2" height="2" fill="#aaa"/><rect x="0.0" y="7.0" width="2" height="2" fill="#aaa"/><rect x="3.5" y="0.0" width="2" height="2" fill="#aaa"/><rect x="3.5" y="3.5" width="2" height="2" fill="#aaa"/><rect x="3.5" y="7.0" width="2" height="2" fill="#aaa"/><rect x="7.0" y="0.0" width="2" height="2" fill="#aaa"/><rect x="7.0" y="3.5" width="2" height="2" fill="#aaa"/><rect x="7.0" y="7.0" width="2" height="2" fill="#aaa"/><rect x="10.5" y="0.0" width="2" height="2" fill="#aaa"/><rect x="10.5" y="3.5" width="2" height="2" fill="#aaa"/><rect x="10.5" y="7.0" width="2" height="2" fill="#aaa"/></svg>
<div class="a" style="left:300px;top:252px;width:1317px;height:1px;background:#c8c8c8"></div>
<div class="a" style="left:324px;top:253px;width:1293px;height:750px;background:#fff"></div>
<div class="a" style="left:300px;top:253px;width:24px;height:750px;background:#fff"></div>
<div class="a" style="left:300px;top:361px;width:24px;height:56px;background:#d4ecf8"></div>
<svg style="left:0;top:0" width="1633" height="1003"><path d="M396.5 233 V252" stroke="#d0d0d0"/><path d="M396.5 252 V1003" stroke="#c8c8c8"/><path d="M509.5 233 V252" stroke="#d0d0d0"/><path d="M509.5 252 V1003" stroke="#c8c8c8"/><path d="M603.5 233 V252" stroke="#d0d0d0"/><path d="M603.5 252 V1003" stroke="#c8c8c8"/><path d="M665.5 233 V252" stroke="#d0d0d0"/><path d="M665.5 252 V1003" stroke="#c8c8c8"/><path d="M760.5 233 V252" stroke="#d0d0d0"/><path d="M760.5 252 V1003" stroke="#c8c8c8"/><path d="M832.5 233 V252" stroke="#d0d0d0"/><path d="M832.5 252 V1003" stroke="#c8c8c8"/><path d="M926.5 233 V252" stroke="#d0d0d0"/><path d="M926.5 252 V1003" stroke="#c8c8c8"/><path d="M1002.5 233 V252" stroke="#d0d0d0"/><path d="M1002.5 252 V1003" stroke="#c8c8c8"/><path d="M1116.5 233 V252" stroke="#d0d0d0"/><path d="M1116.5 252 V1003" stroke="#c8c8c8"/><path d="M1172.5 233 V252" stroke="#d0d0d0"/><path d="M1172.5 252 V1003" stroke="#c8c8c8"/><path d="M1229.5 233 V252" stroke="#d0d0d0"/><path d="M1229.5 252 V1003" stroke="#c8c8c8"/><path d="M1286.5 233 V252" stroke="#d0d0d0"/><path d="M1286.5 252 V1003" stroke="#c8c8c8"/><path d="M1343.5 233 V252" stroke="#d0d0d0"/><path d="M1343.5 252 V1003" stroke="#c8c8c8"/><path d="M1429.5 233 V252" stroke="#d0d0d0"/><path d="M1429.5 252 V1003" stroke="#c8c8c8"/><path d="M1501.5 233 V252" stroke="#d0d0d0"/><path d="M1501.5 252 V1003" stroke="#c8c8c8"/><path d="M1573.5 233 V252" stroke="#d0d0d0"/><path d="M1573.5 252 V1003" stroke="#c8c8c8"/><path d="M324.5 233 V1003" stroke="#c8c8c8"/><path d="M300 279.5 H1617" stroke="#c8c8c8"/><path d="M300 307.5 H1617" stroke="#c8c8c8"/><path d="M300 361.5 H1617" stroke="#c8c8c8"/><path d="M300 389.5 H1617" stroke="#c8c8c8"/><path d="M300 417.5 H1617" stroke="#c8c8c8"/><path d="M300 445.5 H1617" stroke="#c8c8c8"/><path d="M300 464.5 H1617" stroke="#c8c8c8"/><path d="M300 483.5 H1617" stroke="#c8c8c8"/><path d="M300 502.5 H1617" stroke="#c8c8c8"/><path d="M300 521.5 H1617" stroke="#c8c8c8"/><path d="M300 540.5 H1617" stroke="#c8c8c8"/><path d="M300 559.5 H1617" stroke="#c8c8c8"/><path d="M300 578.5 H1617" stroke="#c8c8c8"/><path d="M300 597.5 H1617" stroke="#c8c8c8"/><path d="M300 616.5 H1617" stroke="#c8c8c8"/><path d="M300 635.5 H1617" stroke="#c8c8c8"/><path d="M300 654.5 H1617" stroke="#c8c8c8"/><path d="M300 673.5 H1617" stroke="#c8c8c8"/><path d="M300 692.5 H1617" stroke="#c8c8c8"/><path d="M300 711.5 H1617" stroke="#c8c8c8"/><path d="M300 730.5 H1617" stroke="#c8c8c8"/><path d="M300 749.5 H1617" stroke="#c8c8c8"/><path d="M300 768.5 H1617" stroke="#c8c8c8"/><path d="M300 787.5 H1617" stroke="#c8c8c8"/><path d="M300 806.5 H1617" stroke="#c8c8c8"/><path d="M300 825.5 H1617" stroke="#c8c8c8"/><path d="M300 844.5 H1617" stroke="#c8c8c8"/><path d="M300 863.5 H1617" stroke="#c8c8c8"/><path d="M300 882.5 H1617" stroke="#c8c8c8"/><path d="M300 901.5 H1617" stroke="#c8c8c8"/><path d="M300 920.5 H1617" stroke="#c8c8c8"/><path d="M300 939.5 H1617" stroke="#c8c8c8"/><path d="M300 958.5 H1617" stroke="#c8c8c8"/><path d="M300 977.5 H1617" stroke="#c8c8c8"/><path d="M300 996.5 H1617" stroke="#c8c8c8"/><rect x="324.5" y="279.5" width="1105" height="82" fill="#ccccff"/><rect x="325" y="362" width="184" height="55" fill="#fff"/><rect x="325" y="418" width="1104" height="27" fill="#fff"/><path d="M324.5 279.5 H1429.5 V445.5 H324.5 Z" fill="none" stroke="#111" stroke-width="1.6"/><path d="M324.5 361.5 H1429.5 M324.5 417.5 H1429.5 M396.5 279.5 V417.5 M509.5 279.5 V417.5" fill="none" stroke="#111" stroke-width="1.4"/><path d="M1407 307.5 H1429.5 M1407 389.5 H1429.5" fill="none" stroke="#111" stroke-width="1.4"/></svg>
<div class="t serif" style="left:356px;top:239px;font-size:11px">A</div>
<div class="t serif" style="left:448px;top:239px;font-size:11px">B</div>
<div class="t serif" style="left:1460px;top:239px;font-size:11px">R</div>
<div class="t serif" style="left:1532px;top:239px;font-size:11px">S</div>
<div class="t serif" style="left:1604px;top:239px;font-size:11px">T</div>
<div class="t serif" style="left:300px;top:260px;font-size:11px">1(H)</div>
<div class="t serif" style="left:300px;top:288px;font-size:11px">2(H)</div>
<div class="t serif" style="left:300px;top:329px;font-size:11px">3(H)</div>
<div class="t" style="left:300px;width:24px;text-align:center;top:372px;font-size:11px">4</div>
<div class="t" style="left:300px;width:24px;text-align:center;top:400px;font-size:11px">5</div>
<div class="t" style="left:300px;width:24px;text-align:center;top:427px;font-size:11px">6</div>
<div class="t" style="left:300px;width:24px;text-align:center;top:451px;font-size:11px">7</div>
<div class="t" style="left:300px;width:24px;text-align:center;top:470px;font-size:11px">8</div>
<div class="t" style="left:300px;width:24px;text-align:center;top:489px;font-size:11px">9</div>
<div class="t" style="left:300px;width:24px;text-align:center;top:508px;font-size:11px">10</div>
<div class="t" style="left:300px;width:24px;text-align:center;top:527px;font-size:11px">11</div>
<div class="t" style="left:300px;width:24px;text-align:center;top:546px;font-size:11px">12</div>
<div class="t" style="left:300px;width:24px;text-align:center;top:565px;font-size:11px">13</div>
<div class="t" style="left:300px;width:24px;text-align:center;top:584px;font-size:11px">14</div>
<div class="t" style="left:300px;width:24px;text-align:center;top:603px;font-size:11px">15</div>
<div class="t" style="left:300px;width:24px;text-align:center;top:622px;font-size:11px">16</div>
<div class="t" style="left:300px;width:24px;text-align:center;top:641px;font-size:11px">17</div>
<div class="t" style="left:300px;width:24px;text-align:center;top:660px;font-size:11px">18</div>
<div class="t" style="left:300px;width:24px;text-align:center;top:679px;font-size:11px">19</div>
<div class="t" style="left:300px;width:24px;text-align:center;top:698px;font-size:11px">20</div>
<div class="t" style="left:300px;width:24px;text-align:center;top:717px;font-size:11px">21</div>
<div class="t" style="left:300px;width:24px;text-align:center;top:736px;font-size:11px">22</div>
<div class="t" style="left:300px;width:24px;text-align:center;top:755px;font-size:11px">23</div>
<div class="t" style="left:300px;width:24px;text-align:center;top:774px;font-size:11px">24</div>
<div class="t" style="left:300px;width:24px;text-align:center;top:793px;font-size:11px">25</div>
<div class="t" style="left:300px;width:24px;text-align:center;top:812px;font-size:11px">26</div>
<div class="t" style="left:300px;width:24px;text-align:center;top:831px;font-size:11px">27</div>
<div class="t" style="left:300px;width:24px;text-align:center;top:850px;font-size:11px">28</div>
<div class="t" style="left:300px;width:24px;text-align:center;top:869px;font-size:11px">29</div>
<div class="t" style="left:300px;width:24px;text-align:center;top:888px;font-size:11px">30</div>
<div class="t" style="left:300px;width:24px;text-align:center;top:907px;font-size:11px">31</div>
<div class="t" style="left:300px;width:24px;text-align:center;top:926px;font-size:11px">32</div>
<div class="t" style="left:300px;width:24px;text-align:center;top:945px;font-size:11px">33</div>
<div class="t" style="left:300px;width:24px;text-align:center;top:964px;font-size:11px">34</div>
<div class="t" style="left:300px;width:24px;text-align:center;top:983px;font-size:11px">35</div>
<div class="t" style="left:363px;top:256px;font-size:20px;font-weight:bold;letter-spacing:3px">="预计出口明细</div>
<div class="t" style="left:350px;top:315px;font-size:12px;font-weight:bold">序号</div>
<div class="t" style="left:440px;top:315px;font-size:12px;font-weight:bold">单位</div>
<div class="t" style="left:344px;top:385px;font-size:11px;color:#333">=seq()</div>
<div class="t" style="left:400px;top:377px;font-size:11px;color:#333">预计出口量查询.G(A</div>
<div class="t" style="left:450px;top:391px;font-size:11px;color:#333">)</div>
<svg style="left:398px;top:363px" width="5" height="5"><path d="M0 0 L4 0 L2 4Z" fill="none" stroke="#777" stroke-width="0.8"/></svg>
<svg style="left:503px;top:362px" width="6" height="6"><path d="M0 0 H6 V6Z" fill="#a020f0"/></svg>
<div class="t" style="left:1405px;top:366px;font-size:11px;color:#333">查</div>
<div class="t" style="left:1406px;top:336px;font-size:13px;font-weight:bold">)</div>
<div class="t" style="left:1405px;top:398px;font-size:11px;color:#555">)</div>
<div class="t" style="left:1405px;top:426px;font-size:11px;color:#555">)</div>
<div class="a" style="left:300px;top:1003px;width:1333px;height:19px;background:#f3f3f5"></div>
<div class="a" style="left:317px;top:1004px;width:1234px;height:15px;background:#e0e0e0"></div><div class="a" style="left:300px;top:1003px;width:17px;height:16px;background:#fafafa"></div>
<svg style="left:305px;top:1007px" width="6" height="10"><path d="M5 0.5 L0.8 5 L5 9.5" fill="none" stroke="#777" stroke-width="1"/></svg>
<div class="a" style="left:1617px;top:1003px;width:16px;height:17px;background:#f6f6f6"></div>
<svg style="left:1622px;top:1007px" width="6" height="10"><path d="M1 0.5 L5.2 5 L1 9.5" fill="none" stroke="#777" stroke-width="1"/></svg>
<div class="a" style="left:1617px;top:233px;width:16px;height:769px;background:#e0e0e0"></div>
<div class="a" style="left:1617px;top:233px;width:16px;height:20px;background:#f6f6f6"></div>
<svg style="left:1620px;top:238px" width="10" height="6"><path d="M0.5 5.5 L5 1 L9.5 5.5" fill="none" stroke="#777" stroke-width="1"/></svg>
<div class="a" style="left:1617px;top:965px;width:16px;height:37px;background:#f6f6f6"></div>
<svg style="left:1620px;top:991px" width="10" height="6"><path d="M0.5 0.5 L5 5 L9.5 0.5" fill="none" stroke="#777" stroke-width="1"/></svg>
<div class="a" style="left:1633px;top:47px;width:41px;height:975px;background:#e6e6e8"></div>
<div class="a" style="left:1674px;top:47px;width:132px;height:975px;background:#f3f3f5"></div>
<svg style="left:1651px;top:54px" width="6" height="10"><path d="M0 0 L5 5 L0 10Z" fill="#aaa"/></svg>
<div class="a" style="left:1638px;top:75px;width:32px;height:29px;background:#f3f3f5"></div>
<svg style="left:1645px;top:82px" width="18" height="16"><rect x="0" y="0" width="10" height="9" fill="#3e8ef0"/><rect x="11" y="0" width="7" height="4" fill="#3e8ef0"/><rect x="11" y="5" width="7" height="4" fill="#3e8ef0"/><rect x="0" y="10" width="5" height="6" fill="#3e8ef0"/><rect x="6" y="10" width="5" height="6" fill="#3e8ef0"/><rect x="12" y="10" width="6" height="6" fill="#3e8ef0"/></svg>
<svg style="left:1646px;top:113px" width="16" height="16"><path d="M0.6 0.6 H13 V6 M0.6 0.6 V13.4 H6 M0.6 4.5 H13 M0.6 8.5 H6 M4.5 0.6 V13.4" fill="none" stroke="#555" stroke-width="1.2"/><circle cx="11" cy="11" r="4.5" fill="#555"/><path d="M11 9 V14" stroke="#e6e6e8" stroke-width="1.5"/><circle cx="11" cy="7.8" r="0.8" fill="#e6e6e8"/></svg>
<svg style="left:1646px;top:145px" width="16" height="16"><path d="M3 1 V15 M13 1 V15 M1 3 H15 M1 13 H15" stroke="#555" stroke-width="1.6"/></svg>
<svg style="left:1646px;top:179px" width="16" height="13"><rect x="0.7" y="0.7" width="14.6" height="11.6" fill="none" stroke="#555" stroke-width="1.3"/><path d="M5.5 5 H10.5 L8 8Z" fill="#555"/></svg>
<svg style="left:1645px;top:209px" width="17" height="14"><path d="M3.5 2 H1 V12 H3.5" fill="none" stroke="#555" stroke-width="1.2"/><rect x="5" y="0.7" width="11" height="5" fill="none" stroke="#555" stroke-width="1.3"/><rect x="5" y="8" width="9" height="5" fill="none" stroke="#555" stroke-width="1.3"/></svg>
<svg style="left:1645px;top:241px" width="18" height="18" viewBox="0 0 18 18"><rect x="0" y="0" width="10" height="6" rx="3" transform="translate(1.5 5.5) rotate(45 5 3) translate(0 -2)" fill="none" stroke="#555" stroke-width="1.8"/><rect x="0" y="0" width="10" height="6" rx="3" transform="translate(6.5 10.5) rotate(45 5 3) translate(0 -2)" fill="none" stroke="#555" stroke-width="1.8"/></svg>
<div class="a" style="left:1674px;top:73px;width:132px;height:1px;background:#d8d8da"></div>
<div class="t" style="left:1684px;top:55px;font-size:12px">单元格元素</div>
<div class="t" style="left:1684px;top:88px;font-size:12px">单元格</div>
<div class="a" style="left:1752px;top:84px;width:60px;height:20px;background:#fff;border:1px solid #dcdcde"></div>
<div class="t" style="left:1758px;top:88px;font-size:12px">G4</div>
<div class="t" style="left:1684px;top:119px;font-size:12px">插入元素</div>
<div class="a" style="left:1752px;top:115px;width:60px;height:20px;background:#fff;border:1px solid #dcdcde"></div>
<div class="t" style="left:1758px;top:118px;font-size:12px">插入数据</div>
<div class="t" style="left:1684px;top:184px;font-size:12px">数据集</div>
<div class="a" style="left:1752px;top:180px;width:60px;height:20px;background:#fff;border:1px solid #dcdcde"></div>
<div class="t" style="left:1772px;top:183px;font-size:12px">预计出</div>
<div class="t" style="left:1684px;top:214px;font-size:12px">动态参数</div>
<div class="a" style="left:1752px;top:210px;width:60px;height:20px;background:#fff;border:1px solid #dcdcde"></div>
<div class="t" style="left:1684px;top:244px;font-size:12px">数据列</div>
<div class="a" style="left:1752px;top:240px;width:60px;height:20px;background:#fff;border:1px solid #dcdcde"></div>
<div class="t serif" style="left:1756px;top:245px;font-size:11px;font-weight:bold">F</div>
<div class="t" style="left:1684px;top:274px;font-size:12px">数据设置</div>
<div class="a" style="left:1752px;top:270px;width:60px;height:20px;background:#fff;border:1px solid #dcdcde"></div>
<div class="t" style="left:1758px;top:273px;font-size:12px">分组</div>
<div class="a" style="left:1752px;top:300px;width:60px;height:20px;background:#fff;border:1px solid #dcdcde"></div>
<div class="t" style="left:1758px;top:303px;font-size:12px">普通</div>
<div class="t" style="left:1684px;top:334px;font-size:12px">过滤条件</div>
<div class="a" style="left:1752px;top:330px;width:60px;height:20px;background:#fff;border:1px solid #dcdcde"></div>
<svg style="left:1754px;top:181px" width="14" height="16" viewBox="0 0 16 16"><ellipse cx="7.5" cy="2.8" rx="7" ry="2.6" fill="#2a9ae0"/><path d="M0.5 4.5 Q7.5 8.5 14.5 4.5 V7.5 Q7.5 11.5 0.5 7.5Z" fill="#2a9ae0"/><path d="M0.5 9.2 Q7.5 13.2 14.5 9.2 V12.5 Q7.5 16.5 0.5 12.5Z" fill="#2a9ae0"/></svg>
<div class="a" style="left:1674px;top:144px;width:132px;height:25px;background:#e8e8ea"></div>
<div class="a" style="left:1797px;top:144px;width:9px;height:25px;background:#d6d6d9"></div>
<div class="t" style="left:1722px;top:151px;font-size:12px">基本</div>
<div class="a" style="left:512px;top:220px;width:896px;height:598px;box-shadow:4px 6px 18px 4px rgba(0,0,0,0.23)"></div>
<div class="a" style="left:512px;top:220px;width:896px;height:598px;background:#f3f3f5;border:1px solid #707070"></div>
<div class="a" style="left:513px;top:221px;width:894px;height:24px;background:#fff"></div>
<div class="t" style="left:516px;top:227px;font-size:12px;color:#111">数据库查询</div>
<svg style="left:1385px;top:226px" width="13" height="13"><path d="M0.7 0.7 L12.3 12.3 M12.3 0.7 L0.7 12.3" stroke="#222" stroke-width="1.3"/></svg>
<div class="t" style="left:517px;top:252px;font-size:12px">名字:</div>
<div class="a" style="left:551px;top:248px;width:628px;height:20px;background:#fff;border:1px solid #dedee0"></div>
<div class="t" style="left:555px;top:251px;font-size:12px">预计出口量查询</div>
<div class="a" style="left:517px;top:272px;width:886px;height:517px;border:1px solid #a8a79f"></div>
<div class="a" style="left:519px;top:273px;width:106px;height:21px;background:#fff"></div>
<div class="a" style="left:605px;top:273px;width:20px;height:21px;background:#dcdcdf"></div>
<div class="t mono" style="left:525px;top:280px;font-size:10px">ora_mws_cdc</div>
<svg style="left:610px;top:281px" width="10" height="6"><path d="M0.5 0.5 L5 5 L9.5 0.5" fill="none" stroke="#333" stroke-width="1.1"/></svg>
<div class="a" style="left:629px;top:273px;width:25px;height:21px;background:#fff;border:1px solid #e4e4e6"></div>
<svg style="left:633px;top:276px" width="16" height="16" viewBox="0 0 16 16"><path d="M2 14 L14 2" stroke="#1565c0" stroke-width="2.6"/><path d="M2 2 L14 14" stroke="#1565c0" stroke-width="2.6"/><circle cx="3" cy="3" r="2.6" fill="#1565c0"/><circle cx="13" cy="13" r="2.6" fill="none" stroke="#1565c0" stroke-width="1.6"/><path d="M0 12 L4 16 L1 16Z" fill="#1565c0"/><path d="M12 0 L16 4 L13 1Z" fill="#1565c0"/></svg>
<div class="a" style="left:660px;top:273px;width:25px;height:21px;background:#fff;border:1px solid #e4e4e6"></div>
<svg style="left:665px;top:276px" width="14" height="15" viewBox="0 0 14 15"><path d="M12 8.5 A5.5 5.5 0 1 1 10 3.5" fill="none" stroke="#333" stroke-width="1.6"/><path d="M8 1 L12.5 1 L12.5 5.5Z" fill="#333"/></svg>
<svg style="left:686px;top:276px" width="5" height="17"><path d="M4 0 L1 3 L4 6Z M1 10 L4 13 L1 16Z" fill="#777"/></svg>
<div class="a" style="left:518px;top:297px;width:167px;height:436px;background:#e0e0e2;border:1px solid #a8a79f"></div>
<svg style="left:521px;top:300px" width="14" height="14"><rect x="0.6" y="0.6" width="12.8" height="12.8" fill="#fff" stroke="#1a73e8" stroke-width="1.2"/><path d="M3 4 H11 M3 7.5 H6 M7.5 7.5 H11 M3 10 H11" stroke="#1a73e8" stroke-width="1.2"/></svg>
<div class="t" style="left:540px;top:302px;font-size:12px">正在加载...</div>
<svg style="left:527px;top:746px" width="13" height="13"><rect x="0" y="0" width="13" height="13" fill="#3e8ef0"/><path d="M2.5 6.5 L5.2 9.3 L10.5 3.2" fill="none" stroke="#fff" stroke-width="1.5"/></svg>
<svg style="left:549px;top:744px" width="13" height="16"><path d="M0.6 0.6 H9 L12.4 4 V15.4 H0.6Z" fill="#fafafa" stroke="#888" stroke-width="1"/><rect x="2.5" y="3.5" width="7.5" height="9" fill="#999"/><path d="M2.5 6 H10 M2.5 8.5 H10 M2.5 11 H10 M5 3.5 V12.5 M7.5 3.5 V12.5" stroke="#ddd" stroke-width="0.6"/></svg>
<div class="t" style="left:568px;top:747px;font-size:12px">表</div>
<svg style="left:610px;top:746px" width="13" height="13"><rect x="0" y="0" width="13" height="13" fill="#3e8ef0"/><path d="M2.5 6.5 L5.2 9.3 L10.5 3.2" fill="none" stroke="#fff" stroke-width="1.5"/></svg>
<svg style="left:631px;top:744px" width="17" height="16"><rect x="0" y="5" width="7" height="11" fill="#b8d8e0"/><rect x="1" y="6" width="5" height="2" fill="#40b8e8"/><rect x="9" y="0" width="7" height="11" fill="#d0e8f0"/><rect x="10" y="1" width="5" height="2" fill="#40b8e8"/><path d="M7 10 L9 6" stroke="#889" stroke-width="1"/></svg>
<div class="t" style="left:651px;top:747px;font-size:12px">视图</div>
<div class="a" style="left:518px;top:768px;width:167px;height:20px;background:#fff;border:1px solid #e8e8ea"></div>
<div class="a" style="left:691px;top:272px;width:712px;height:517px;border-left:1px solid #a8a79f"></div>
<svg style="left:700px;top:279px" width="14" height="16" viewBox="0 0 13 14"><path d="M0.6 0.6 H8 L11 3.6 V13.4 H0.6Z" fill="none" stroke="#222" stroke-width="1.1"/><circle cx="7" cy="8.5" r="2.6" fill="none" stroke="#222" stroke-width="1.2"/><path d="M9 10.5 L11.5 13" stroke="#222" stroke-width="1.4"/></svg>
<div class="a" style="left:723px;top:278px;width:1px;height:18px;background:#dcdcde"></div>
<svg style="left:731px;top:278px" width="16" height="17"><path d="M0.6 0.6 H15 V13 L12 16.4 H0.6Z" fill="#fff" stroke="#222" stroke-width="1.1"/><path d="M3 2.5 H12 V9 H9 V11 H6 V14 H3Z" fill="#1a73e8"/><path d="M7 4.5 H10 V7 H7Z" fill="#fff"/></svg>
<div class="a" style="left:754px;top:275px;width:84px;height:23px;background:#f9f9fa"></div>
<div class="a" style="left:759px;top:280px;width:13px;height:13px;background:#fff;border:1px solid #777"></div>
<div class="t" style="left:775px;top:280px;font-size:12px">共享数据集</div>
<div class="a" style="left:848px;top:275px;width:161px;height:23px;background:#fff;border:1px solid #e6e6e8"></div>
<div class="a" style="left:990px;top:276px;width:18px;height:21px;background:#dcdcdf"></div>
<div class="t" style="left:854px;top:280px;font-size:12px">所有记录都保存在内存中</div>
<svg style="left:994px;top:284px" width="10" height="6"><path d="M0.5 0.5 L5 5 L9.5 0.5" fill="none" stroke="#333" stroke-width="1.1"/></svg>
<div class="a" style="left:692px;top:306px;width:710px;height:232px;background:#fff;border-top:1px solid #a0a0a0;border-bottom:1px solid #a0a0a0;overflow:hidden">
<div class="a" style="left:0;top:0;width:30px;height:232px;background:#f0f0f0;border-right:1px solid #e0e0e0"></div>
<div class="a" style="left:30px;top:214px;width:662px;height:17px;background:#ffffb8"></div>
</div>
<div class="a" style="left:692px;top:307px;width:692px;height:230px;overflow:hidden">
<div class="t" style="left:4px;top:-9px;font-size:11px;color:#777;font-family:'Liberation Sans'">38</div>
<div class="t mono" style="left:32px;top:-8px;font-size:11.667px;color:#000;white-space:pre;transform:scaleY(1.15);transform-origin:0 50%">     ${if<span style="color:#ff2020">(</span>len<span style="color:#ff2020">(</span>orgCode<span style="color:#ff2020">)</span> == 0,"",<span style="color:#e020a0">&quot;and A.org_code </span> in orgCode + "'     <span style="color:#ff2020">)</span>}</div>
<div class="t" style="left:4px;top:7px;font-size:11px;color:#777;font-family:'Liberation Sans'">39</div>
<div class="t mono" style="left:32px;top:8px;font-size:11.667px;color:#000;white-space:pre;transform:scaleY(1.15);transform-origin:0 50%">     <span style="color:#0000e6;font-weight:bold">AND</span> A<span style="color:#0000ff">.</span>statistical_time <span style="color:#ff2020">&gt;</span>= TRUNC <span style="color:#ff2020">(</span>SYSDATE<span style="color:#ff2020">)</span></div>
<div class="t" style="left:4px;top:23px;font-size:11px;color:#777;font-family:'Liberation Sans'">40</div>
<div class="t mono" style="left:32px;top:24px;font-size:11.667px;color:#000;white-space:pre;transform:scaleY(1.15);transform-origin:0 50%"><span style="color:#0000e6;font-weight:bold">GROUP BY</span></div>
<div class="t" style="left:4px;top:39px;font-size:11px;color:#777;font-family:'Liberation Sans'">41</div>
<div class="t mono" style="left:32px;top:40px;font-size:11.667px;color:#000;white-space:pre;transform:scaleY(1.15);transform-origin:0 50%">     A<span style="color:#0000ff">.</span>org_code,</div>
<div class="t" style="left:4px;top:55px;font-size:11px;color:#777;font-family:'Liberation Sans'">42</div>
<div class="t mono" style="left:32px;top:56px;font-size:11.667px;color:#000;white-space:pre;transform:scaleY(1.15);transform-origin:0 50%">     B<span style="color:#0000ff">.</span>org_sname,</div>
<div class="t" style="left:4px;top:71px;font-size:11px;color:#777;font-family:'Liberation Sans'">43</div>
<div class="t mono" style="left:32px;top:72px;font-size:11.667px;color:#000;white-space:pre;transform:scaleY(1.15);transform-origin:0 50%">     A<span style="color:#0000ff">.</span>route_code,</div>
<div class="t" style="left:4px;top:87px;font-size:11px;color:#777;font-family:'Liberation Sans'">44</div>
<div class="t mono" style="left:32px;top:88px;font-size:11.667px;color:#000;white-space:pre;transform:scaleY(1.15);transform-origin:0 50%">     C<span style="color:#0000ff">.</span>name,</div>
<div class="t" style="left:4px;top:103px;font-size:11px;color:#777;font-family:'Liberation Sans'">45</div>
<div class="t mono" style="left:32px;top:104px;font-size:11.667px;color:#000;white-space:pre;transform:scaleY(1.15);transform-origin:0 50%">     C<span style="color:#0000ff">.</span>line_type,</div>
<div class="t" style="left:4px;top:119px;font-size:11px;color:#777;font-family:'Liberation Sans'">46</div>
<div class="t mono" style="left:32px;top:120px;font-size:11.667px;color:#000;white-space:pre;transform:scaleY(1.15);transform-origin:0 50%">     A<span style="color:#0000ff">.</span>unseal_org_code,</div>
<div class="t" style="left:4px;top:135px;font-size:11px;color:#777;font-family:'Liberation Sans'">47</div>
<div class="t mono" style="left:32px;top:136px;font-size:11.667px;color:#000;white-space:pre;transform:scaleY(1.15);transform-origin:0 50%">     D<span style="color:#0000ff">.</span>org_sname,</div>
<div class="t" style="left:4px;top:151px;font-size:11px;color:#777;font-family:'Liberation Sans'">48</div>
<div class="t mono" style="left:32px;top:152px;font-size:11.667px;color:#000;white-space:pre;transform:scaleY(1.15);transform-origin:0 50%">     D<span style="color:#0000ff">.</span>province_name,</div>
<div class="t" style="left:4px;top:167px;font-size:11px;color:#777;font-family:'Liberation Sans'">49</div>
<div class="t mono" style="left:32px;top:168px;font-size:11.667px;color:#000;white-space:pre;transform:scaleY(1.15);transform-origin:0 50%">     A<span style="color:#0000ff">.</span>estimate_depart_time,</div>
<div class="t" style="left:4px;top:183px;font-size:11px;color:#777;font-family:'Liberation Sans'">50</div>
<div class="t mono" style="left:32px;top:184px;font-size:11.667px;color:#000;white-space:pre;transform:scaleY(1.15);transform-origin:0 50%">     A<span style="color:#0000ff">.</span>destination_org_center_code,</div>
<div class="t" style="left:4px;top:199px;font-size:11px;color:#777;font-family:'Liberation Sans'">51</div>
<div class="t mono" style="left:32px;top:200px;font-size:11.667px;color:#000;white-space:pre;transform:scaleY(1.15);transform-origin:0 50%">     E<span style="color:#0000ff">.</span>province_name,</div>
<div class="t" style="left:4px;top:215px;font-size:11px;color:#777;font-family:'Liberation Sans'">52</div>
<div class="t mono" style="left:32px;top:216px;font-size:11.667px;color:#000;white-space:pre;transform:scaleY(1.15);transform-origin:0 50%">     E<span style="color:#0000ff">.</span>center_cover_name</div>
</div>
<div class="a" style="left:1384px;top:307px;width:17px;height:230px;background:#f6f6f4;border-left:1px solid #e4e4e0"></div>
<div class="a" style="left:1384px;top:307px;width:17px;height:16px;background:#fff"></div>
<div class="a" style="left:1385px;top:470px;width:15px;height:49px;background:#dcdcdc"></div>
<svg style="left:1388px;top:312px" width="10" height="6"><path d="M0.5 5 L5 1 L9.5 5" fill="none" stroke="#555" stroke-width="1.5"/></svg>
<div class="a" style="left:1384px;top:520px;width:17px;height:17px;background:#fff"></div>
<svg style="left:1388px;top:526px" width="10" height="6"><path d="M0.5 1 L5 5 L9.5 1" fill="none" stroke="#555" stroke-width="1.5"/></svg>
<div class="t" style="left:704px;top:550px;font-size:12px">您可以键入"${abc}"做为一个参数，这里abc是参数的名称。例如:</div>
<div class="t mono" style="left:704px;top:568px;font-size:10px;font-weight:bold;color:#222">select * from table where id=${abc}。</div>
<div class="t mono" style="left:704px;top:583px;font-size:10px;font-weight:bold;color:#222">select * from table where id='${abc}'。(如果id字段为字符串类型)</div>
<svg style="left:1336px;top:602px" width="10" height="14"><path d="M5 2 V14" stroke="#222" stroke-width="2"/><path d="M0.5 6 L5 0.5 L9.5 6Z" fill="#222"/></svg>
<svg style="left:1361px;top:602px" width="10" height="14"><path d="M5 0 V12" stroke="#222" stroke-width="2"/><path d="M0.5 8 L5 13.5 L9.5 8Z" fill="#222"/></svg>
<svg style="left:1384px;top:602px" width="14" height="15" viewBox="0 0 14 15"><path d="M12 8.5 A5.5 5.5 0 1 1 10 3.5" fill="none" stroke="#333" stroke-width="1.6"/><path d="M8 1 L12.5 1 L12.5 5.5Z" fill="#333"/></svg>
<div class="a" style="left:693px;top:624px;width:707px;height:19px;background:#fff"></div>
<div class="a" style="left:1045px;top:627px;width:1px;height:16px;background:#d8d8d8"></div>
<div class="a" style="left:1399px;top:627px;width:1px;height:16px;background:#c8c0b0"></div>
<div class="t" style="left:857px;top:628px;font-size:12px">参数</div>
<div class="t" style="left:1215px;top:628px;font-size:12px">值</div>
<div class="a" style="left:693px;top:643px;width:353px;height:21px;background:#c8dbe8;border-bottom:1px solid #d8d8d8;border-top:1px solid #d8d8d8"></div>
<div class="t mono" style="left:694px;top:651px;font-size:10px;font-weight:bold;color:#111">orgCode</div>
<div class="a" style="left:1046px;top:643px;width:23px;height:21px;background:#fff;border-bottom:1px solid #d8d8d8"></div>
<svg style="left:1046px;top:645px" width="20" height="18"><path d="M1 6 L4 2 L7 6 M2 4.5 L6 4.5 M3 5 L4 3.5 L5 5" fill="none" stroke="#444" stroke-width="0.8"/><path d="M8.5 0.5 V4 Q8.5 5.5 10 5.5 Q11.5 5.5 11.5 4 V0.5" fill="none" stroke="#444" stroke-width="0.9"/></svg>
<div class="t" style="left:1046px;top:652px;font-size:7px;color:#333;letter-spacing:-0.3px">ABC</div>
<svg style="left:1061px;top:658px" width="5" height="4"><path d="M0 0 H5 L2.5 3Z" fill="#333"/></svg>
<div class="a" style="left:1069px;top:643px;width:332px;height:21px;background:#fff;border:2px solid #d4d4d4;border-left:1px solid #e0e0e0"></div>
<div class="a" style="left:693px;top:663px;width:353px;height:21px;background:#fff;border-bottom:1px solid #d8d8d8;border-top:1px solid #d8d8d8"></div>
<div class="t mono" style="left:694px;top:671px;font-size:10px;font-weight:bold;color:#111">lineType</div>
<div class="a" style="left:1046px;top:663px;width:23px;height:21px;background:#fff;border-bottom:1px solid #d8d8d8"></div>
<svg style="left:1046px;top:665px" width="20" height="18"><path d="M1 6 L4 2 L7 6 M2 4.5 L6 4.5 M3 5 L4 3.5 L5 5" fill="none" stroke="#444" stroke-width="0.8"/><path d="M8.5 0.5 V4 Q8.5 5.5 10 5.5 Q11.5 5.5 11.5 4 V0.5" fill="none" stroke="#444" stroke-width="0.9"/></svg>
<div class="t" style="left:1046px;top:672px;font-size:7px;color:#333;letter-spacing:-0.3px">ABC</div>
<svg style="left:1061px;top:678px" width="5" height="4"><path d="M0 0 H5 L2.5 3Z" fill="#333"/></svg>
<div class="a" style="left:1069px;top:663px;width:332px;height:21px;background:#fff;border:2px solid #d4d4d4;border-left:1px solid #e0e0e0"></div>
<div class="a" style="left:693px;top:683px;width:353px;height:21px;background:#fff;border-bottom:1px solid #d8d8d8;border-top:1px solid #d8d8d8"></div>
<div class="t mono" style="left:694px;top:691px;font-size:10px;font-weight:bold;color:#111">baseProductCode</div>
<div class="a" style="left:1046px;top:683px;width:23px;height:21px;background:#fff;border-bottom:1px solid #d8d8d8"></div>
<svg style="left:1046px;top:685px" width="20" height="18"><path d="M1 6 L4 2 L7 6 M2 4.5 L6 4.5 M3 5 L4 3.5 L5 5" fill="none" stroke="#444" stroke-width="0.8"/><path d="M8.5 0.5 V4 Q8.5 5.5 10 5.5 Q11.5 5.5 11.5 4 V0.5" fill="none" stroke="#444" stroke-width="0.9"/></svg>
<div class="t" style="left:1046px;top:692px;font-size:7px;color:#333;letter-spacing:-0.3px">ABC</div>
<svg style="left:1061px;top:698px" width="5" height="4"><path d="M0 0 H5 L2.5 3Z" fill="#333"/></svg>
<div class="a" style="left:1069px;top:683px;width:332px;height:21px;background:#fff;border:2px solid #d4d4d4;border-left:1px solid #e0e0e0"></div>
<div class="a" style="left:693px;top:703px;width:353px;height:21px;background:#fff;border-bottom:1px solid #d8d8d8;border-top:1px solid #d8d8d8"></div>
<div class="t mono" style="left:694px;top:711px;font-size:10px;font-weight:bold;color:#111">transportType</div>
<div class="a" style="left:1046px;top:703px;width:23px;height:21px;background:#fff;border-bottom:1px solid #d8d8d8"></div>
<svg style="left:1046px;top:705px" width="20" height="18"><path d="M1 6 L4 2 L7 6 M2 4.5 L6 4.5 M3 5 L4 3.5 L5 5" fill="none" stroke="#444" stroke-width="0.8"/><path d="M8.5 0.5 V4 Q8.5 5.5 10 5.5 Q11.5 5.5 11.5 4 V0.5" fill="none" stroke="#444" stroke-width="0.9"/></svg>
<div class="t" style="left:1046px;top:712px;font-size:7px;color:#333;letter-spacing:-0.3px">ABC</div>
<svg style="left:1061px;top:718px" width="5" height="4"><path d="M0 0 H5 L2.5 3Z" fill="#333"/></svg>
<div class="a" style="left:1069px;top:703px;width:332px;height:21px;background:#fff;border:2px solid #d4d4d4;border-left:1px solid #e0e0e0"></div>
<div class="a" style="left:693px;top:723px;width:353px;height:21px;background:#fff;border-bottom:1px solid #d8d8d8;border-top:1px solid #d8d8d8"></div>
<div class="t mono" style="left:694px;top:731px;font-size:10px;font-weight:bold;color:#111">hourFlag</div>
<div class="a" style="left:1046px;top:723px;width:23px;height:21px;background:#fff;border-bottom:1px solid #d8d8d8"></div>
<svg style="left:1046px;top:725px" width="20" height="18"><path d="M1 6 L4 2 L7 6 M2 4.5 L6 4.5 M3 5 L4 3.5 L5 5" fill="none" stroke="#444" stroke-width="0.8"/><path d="M8.5 0.5 V4 Q8.5 5.5 10 5.5 Q11.5 5.5 11.5 4 V0.5" fill="none" stroke="#444" stroke-width="0.9"/></svg>
<div class="t" style="left:1046px;top:732px;font-size:7px;color:#333;letter-spacing:-0.3px">ABC</div>
<svg style="left:1061px;top:738px" width="5" height="4"><path d="M0 0 H5 L2.5 3Z" fill="#333"/></svg>
<div class="a" style="left:1069px;top:723px;width:332px;height:21px;background:#fff;border:2px solid #d4d4d4;border-left:1px solid #e0e0e0"></div>
<div class="t" style="left:1074px;top:668px;font-size:12px">1</div>
<div class="a" style="left:1399px;top:643px;width:2px;height:102px;background:#d0d0d0"></div>
<div class="a" style="left:1295px;top:793px;width:44px;height:20px;background:#fff;border:1px solid #dcdcde"></div>
<div class="t" style="left:1305px;top:798px;font-size:12px">确定</div>
<div class="a" style="left:1349px;top:793px;width:44px;height:20px;background:#fff;border:1px solid #dcdcde"></div>
<div class="t" style="left:1359px;top:798px;font-size:12px">取消</div>
</body></html>
